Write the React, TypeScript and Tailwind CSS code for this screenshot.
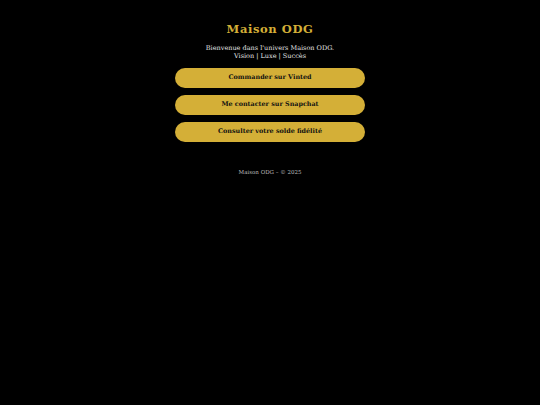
export default function App() {
  const links = [
    "Commander sur Vinted",
    "Me contacter sur Snapchat",
    "Consulter votre solde fidélité",
  ];
  return (
    <div className="min-h-[405px] bg-black flex flex-col items-center pt-[21px] text-[#dddddd]" style={{ fontFamily: '"DejaVu Serif", "Liberation Serif", serif' }}>
      <h1 className="text-[11.5px] font-bold tracking-[0.6px] text-[#d4af37] leading-[16px]">Maison ODG</h1>
      <p className="mt-[7px] text-[6.5px] leading-[8px] text-center text-[#e6e6e6]">
        Bienvenue dans l'univers Maison ODG.
        <br />
        Vision | Luxe | Succès
      </p>
      <div className="mt-[8px] flex flex-col gap-[7px]">
        {links.map((l) => (
          <button key={l} className="w-[190px] h-[20px] rounded-full bg-[#d4af37] text-[#111111] text-[6.4px] font-bold">
            {l}
          </button>
        ))}
      </div>
      <footer className="mt-[26px] text-[5.5px] text-[#bbbbbb]">Maison ODG – © 2025</footer>
    </div>
  );
}
